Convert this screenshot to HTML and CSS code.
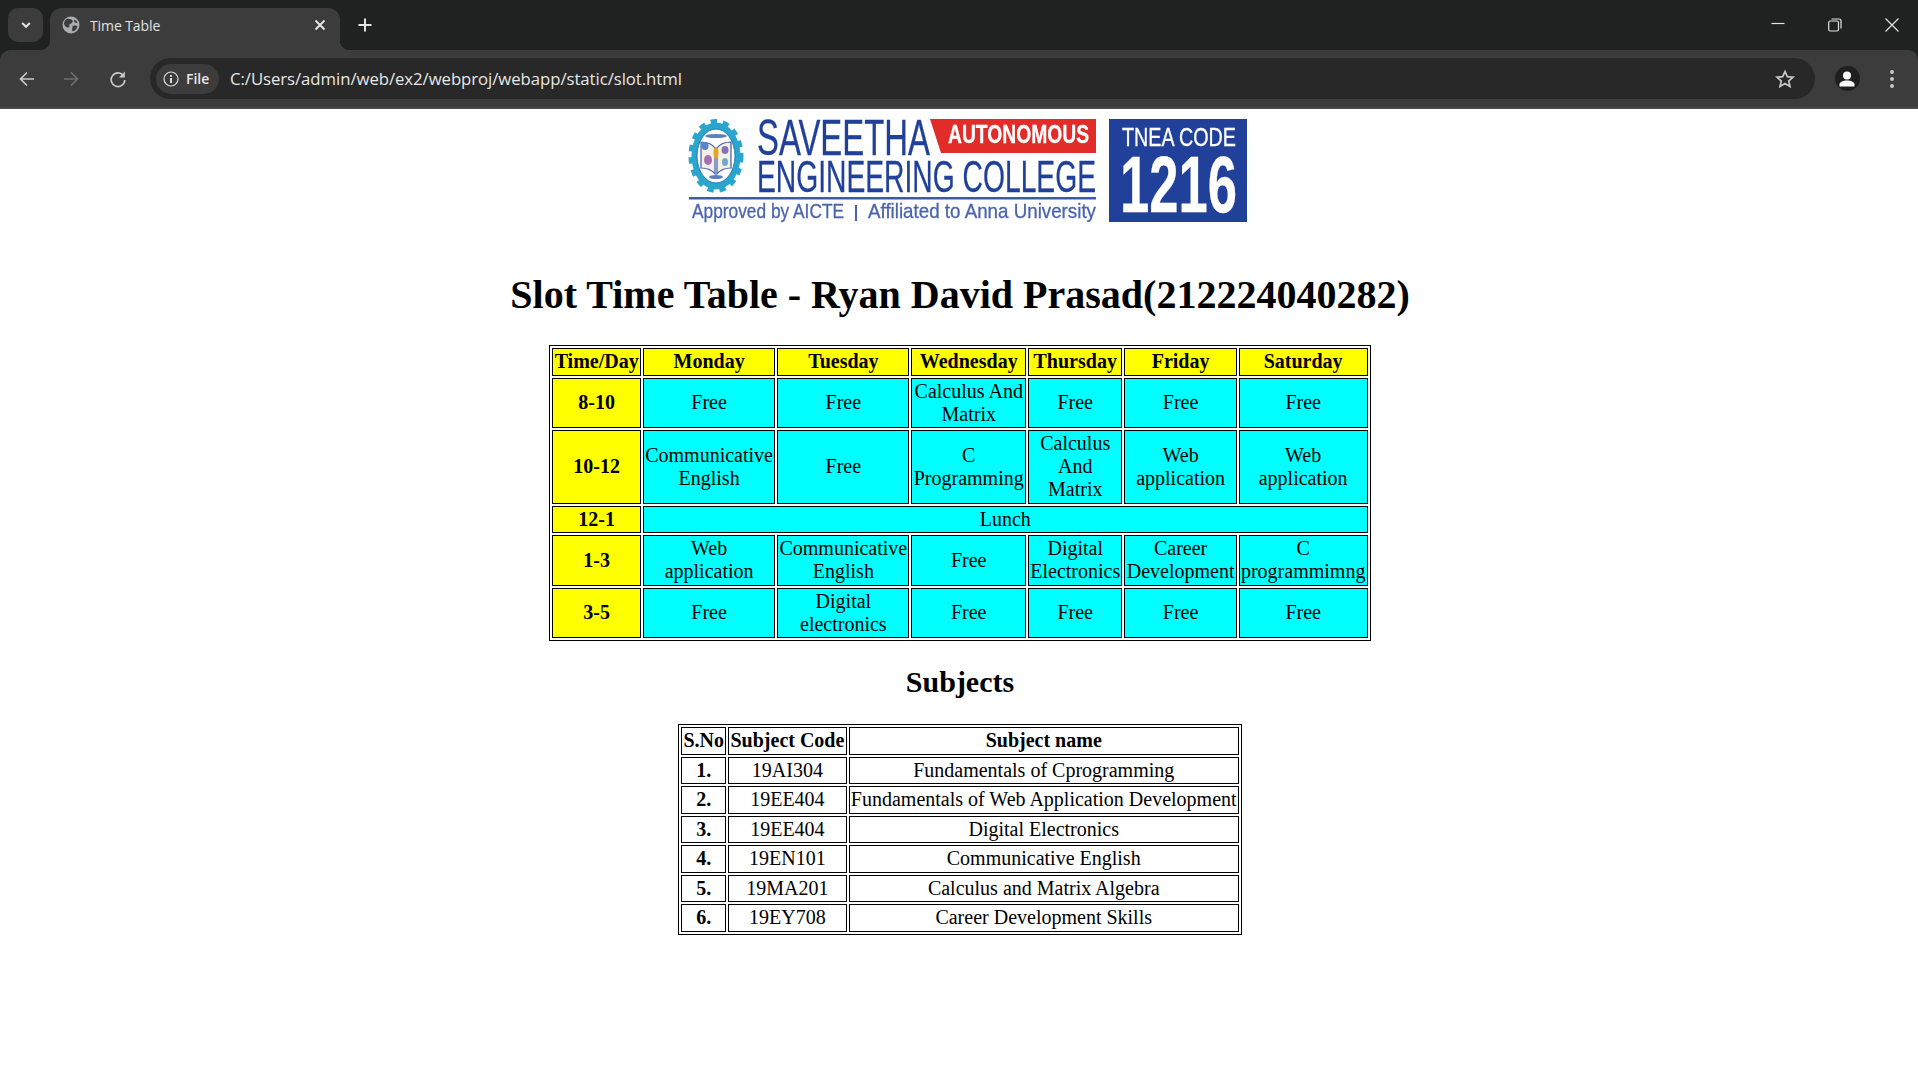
FILE: index.html
```html
<!DOCTYPE html>
<html lang="en">
<head>
<meta charset="utf-8">
<title>Time Table</title>
<link rel="stylesheet" href="styles.css">
</head>
<body>
<header class="browser">
  <div class="tabstrip">
    <button class="tabsearch"><svg width="12" height="12" viewBox="0 0 12 12"><path d="M2.200 4l3.800 3.800L9.800 4" class="ln2"/></svg></button>
    <div class="tab">
      <svg class="globe" width="18" height="18" viewBox="0 0 18 18"><circle cx="9" cy="9" r="8.500" fill="#a9adb1"/><path d="M4.500 3c2.500-.6 5 .2 6 1.500S9.500 7.500 8 8 8.500 11 6.500 11.500 2.500 10 2 8C2 6 3 4 4.500 3zM10.500 10c2-.6 4-.6 5 .3-.5 2.500-2 4-4 5-1.300-.3-1.800-1.300-1.500-2.300s1-2 .5-3zM12.500 3.500c1.300.7 2.300 1.800 3 3.200-1 .5-2.300.2-3-.7s-.4-1.600 0-2.500z" fill="#3c3c3c"/></svg>
      <span class="tabtitle">Time Table</span>
      <svg class="tabclose" width="12" height="12" viewBox="0 0 12 12"><path d="M1.500 1.500l9 9M10.500 1.500l-9 9" class="ln2"/></svg>
    </div>
    <svg class="newtab" width="14" height="14" viewBox="0 0 14 14"><path d="M7 .5v13M.5 7h13" class="ln2"/></svg>
    <div class="winctl">
      <svg width="14" height="14" viewBox="0 0 14 14"><path d="M.5 5.500h13" class="ln1"/></svg>
      <svg width="14" height="14" viewBox="0 0 14 14"><rect x=".7" y="3" width="9.800" height="10" rx="1.500" class="ln1"/><path d="M3.500 1h7.500c1.300 0 2 .7 2 2v7.500" class="ln1"/></svg>
      <svg width="14" height="14" viewBox="0 0 14 14"><path d="M.5.500l13 13M13.500.500l-13 13" class="ln1"/></svg>
    </div>
  </div>
  <div class="toolbar">
    <svg class="navicon" width="18" height="18" viewBox="0 0 18 18"><path d="M16 9H2.500M9 2.500L2.500 9 9 15.500" class="ln2 soft"/></svg>
    <svg class="navicon" width="18" height="18" viewBox="0 0 18 18"><path d="M2 9h13.500M9 2.500L15.500 9 9 15.500" class="ln2 dim"/></svg>
    <svg class="navicon" width="18" height="18" viewBox="0 0 18 18"><path d="M14.300 5.500A6.800 6.800 0 1 0 15.800 10" class="ln2 soft"/><path d="M15.800 1.500v6h-6z" fill="#c7c7c7"/></svg>
    <div class="omnibox">
      <div class="chip">
        <svg width="16" height="16" viewBox="0 0 16 16"><circle cx="8" cy="8" r="7" class="ln1 chipline"/><path d="M8 7v5M8 4v1.800" class="ln2 chipline"/></svg>
        <span>File</span>
      </div>
      <span class="url">C:/Users/admin/web/ex2/webproj/webapp/static/slot.html</span>
      <svg class="star" width="20" height="20" viewBox="0 0 20 20"><path d="M10 2.500l2.300 5.200 5.700.5-4.300 3.800 1.300 5.600-5-3-5 3 1.300-5.600L2 8.200l5.700-.5z" class="ln2 soft"/></svg>
    </div>
    <div class="avatar"><svg width="18" height="18" viewBox="0 0 18 18"><circle cx="9" cy="5.500" r="4" fill="#fff"/><path d="M1.500 16.500v-2c0-2.500 4-4 7.500-4s7.500 1.500 7.500 4v2z" fill="#fff"/></svg></div>
    <svg class="menu" width="6" height="18" viewBox="0 0 6 18"><circle cx="3" cy="2" r="2"/><circle cx="3" cy="9" r="2"/><circle cx="3" cy="16" r="2"/></svg>
  </div>
</header>
<main class="page">
  <svg class="logo" width="580" height="136" viewBox="670 109 580 136">
    <g class="blur">
      <ellipse cx="716" cy="156" rx="24.500" ry="33.500" fill="#2aa5cd"/>
      <ellipse cx="716" cy="156" rx="25.500" ry="35" fill="none" stroke="#2aa5cd" stroke-width="4" stroke-dasharray="6.500 6"/>
      <ellipse cx="716" cy="156" rx="19" ry="27" fill="#fff" stroke="#1f7fb0" stroke-width="1"/>
      <path d="M701 142c5 0 11 2 14 6v26c-3-4-9-6-14-6zM731 142c-5 0-11 2-14 6v26c3-4 9-6 14-6z" fill="#f3efe2" stroke="#3f5cab" stroke-width="1.200"/>
      <ellipse cx="705" cy="146" rx="3.500" ry="4" fill="#5a83c8"/>
      <ellipse cx="708" cy="160" rx="4" ry="5" fill="#a56fb4"/>
      <ellipse cx="725" cy="150" rx="3.500" ry="4" fill="#8a6fb8"/>
      <ellipse cx="725" cy="162" rx="3" ry="4" fill="#6fa8c8"/>
      <ellipse cx="716" cy="153" rx="2.500" ry="6" fill="#e5a32a"/>
      <ellipse cx="716" cy="136" rx="11" ry="2" fill="#5f7fb8"/>
      <ellipse cx="716" cy="177" rx="7" ry="2" fill="#5f7fb8"/>
      <polygon points="930,119 1096,119 1096,153 941,153" fill="#e22c2a"/>
      <text x="757" y="155" class="lg" textLength="173" lengthAdjust="spacingAndGlyphs" font-size="50">SAVEETHA</text>
      <text x="948" y="143" class="lg white bold" textLength="141" lengthAdjust="spacingAndGlyphs" font-size="25">AUTONOMOUS</text>
      <text x="757" y="192" class="lg" textLength="339" lengthAdjust="spacingAndGlyphs" font-size="45">ENGINEERING COLLEGE</text>
      <rect x="689" y="197" width="407" height="2.500" fill="#3d5aa6"/>
      <text x="692" y="218" class="lg soft-blue" textLength="152" lengthAdjust="spacingAndGlyphs" font-size="21">Approved by AICTE</text>
      <rect x="855" y="205" width="2" height="16" fill="#4a63ae"/>
      <text x="868" y="218" class="lg soft-blue" textLength="228" lengthAdjust="spacingAndGlyphs" font-size="21">Affiliated to Anna University</text>
      <rect x="1109" y="119" width="138" height="103" fill="#21409a"/>
      <text x="1122" y="146" class="lg white" textLength="114" lengthAdjust="spacingAndGlyphs" font-size="25">TNEA CODE</text>
      <text x="1120" y="212" class="lg white bold" textLength="117" lengthAdjust="spacingAndGlyphs" font-size="80">1216</text>
    </g>
  </svg>
  <h1 class="title">Slot Time Table - Ryan David Prasad(212224040282)</h1>
  <table class="grid slots">
    <tr class="head"><th>Time/Day</th><th>Monday</th><th>Tuesday</th><th>Wednesday</th><th>Thursday</th><th>Friday</th><th>Saturday</th></tr>
    <tr><th>8-10</th><td>Free</td><td>Free</td><td>Calculus And Matrix</td><td>Free</td><td>Free</td><td>Free</td></tr>
    <tr><th>10-12</th><td>Communicative English</td><td>Free</td><td>C Programming</td><td>Calculus And Matrix</td><td>Web application</td><td>Web application</td></tr>
    <tr><th>12-1</th><td colspan="6">Lunch</td></tr>
    <tr><th>1-3</th><td>Web application</td><td>Communicative English</td><td>Free</td><td>Digital Electronics</td><td>Career Development</td><td>C programmimng</td></tr>
    <tr><th>3-5</th><td>Free</td><td>Digital electronics</td><td>Free</td><td>Free</td><td>Free</td><td>Free</td></tr>
  </table>
  <h2 class="subtitle">Subjects</h2>
  <table class="grid subjects">
    <tr><th>S.No</th><th>Subject Code</th><th>Subject name</th></tr>
    <tr><th>1.</th><td>19AI304</td><td>Fundamentals of Cprogramming</td></tr>
    <tr><th>2.</th><td>19EE404</td><td>Fundamentals of Web Application Development</td></tr>
    <tr><th>3.</th><td>19EE404</td><td>Digital Electronics</td></tr>
    <tr><th>4.</th><td>19EN101</td><td>Communicative English</td></tr>
    <tr><th>5.</th><td>19MA201</td><td>Calculus and Matrix Algebra</td></tr>
    <tr><th>6.</th><td>19EY708</td><td>Career Development Skills</td></tr>
  </table>
</main>
</body>
</html>
```
FILE: styles.css
```css
* { box-sizing: border-box; }
html, body { margin: 0; padding: 0; background: #fff; }
body { font-family: "Liberation Serif", serif; color: #000; overflow: hidden; height: 1087px; }

.browser { font-family: "Open Sans", "Noto Sans", sans-serif; height: 109px; background: #202222; display: flex; flex-direction: column; }
.ln1 { fill: none; stroke: #e3e3e3; stroke-width: 1.200; }
.ln2 { fill: none; stroke: #e3e3e3; stroke-width: 2; }
.ln2.soft { stroke: #c7c7c7; stroke-width: 1.700; }
.ln2.dim { stroke: #6f6f6f; stroke-width: 1.700; }
.ln2.chipline, .ln1.chipline { stroke: #dcdcdc; }

.tabstrip { height: 50px; flex: none; display: flex; align-items: flex-start; padding-top: 8px; padding-left: 8px; }
.tabsearch { width: 35px; height: 34px; margin: 0; padding: 0; border: 0; border-radius: 10px; background: #3c3c3c; display: flex; align-items: center; justify-content: center; }
.tab { position: relative; width: 290px; height: 42px; margin-left: 7px; background: #3c3c3c; border-radius: 12px 12px 0 0; display: flex; align-items: center; padding: 0 14px 8px 12px; color: #e3e3e3; }
.tab::before, .tab::after { content: ""; position: absolute; bottom: 0; width: 10px; height: 10px; }
.tab::before { left: -10px; background: radial-gradient(circle at 0 0, transparent 10px, #3c3c3c 10.5px); }
.tab::after { right: -10px; background: radial-gradient(circle at 100% 0, transparent 10px, #3c3c3c 10.5px); }
.globe { flex: none; }
.tabtitle { flex: 1; margin-left: 10px; font-size: 14px; letter-spacing: -.1px; }
.tabclose { flex: none; }
.newtab { margin: 10px 0 0 18px; }
.winctl { margin-left: auto; display: flex; gap: 43px; padding: 10px 19px 0 0; }
.winctl svg { display: block; }

.toolbar { height: 59px; flex: none; background: #3c3c3c; border-radius: 10px 10px 0 0; display: flex; align-items: center; padding: 0 0 0 18px; border-bottom: 2px solid #4a4a4a; }
.navicon { margin-right: 26px; flex: none; }
.toolbar .navicon:nth-child(2) { margin-right: 29px; }
.toolbar .navicon:nth-child(3) { margin-right: 23px; }
.omnibox { width: 1665px; height: 41px; border-radius: 21px; background: #282828; display: flex; align-items: center; padding: 0 20px 0 6px; color: #e6e6e6; flex: none; }
.chip { height: 30px; width: 63px; border-radius: 15px; background: #3c3c3c; display: flex; align-items: center; gap: 7px; padding-left: 7px; font-size: 14px; font-weight: 600; flex: none; }
.url { margin-left: 11px; font-size: 16.750px; letter-spacing: -.06px; flex: 1; white-space: nowrap; }
.star { flex: none; }
.avatar { margin-left: 19.500px; width: 25px; height: 25px; border-radius: 50%; background: #1f1f1f; display: flex; align-items: center; justify-content: center; flex: none; }
.menu { margin-left: 29.500px; fill: #c7c7c7; flex: none; }

.page { display: flex; flex-direction: column; align-items: center; padding-left: 2px; }
.logo { display: block; flex: none; }
.blur { filter: blur(.6px); }
.lg { font-family: "Liberation Sans Narrow", "Liberation Sans", sans-serif; fill: #21409a; stroke: #21409a; stroke-width: .3px; }
.lg.white { fill: #fff; stroke: #fff; }
.lg.bold { font-weight: 700; }
.lg.soft-blue { fill: #4a63ae; stroke: #4a63ae; }

.title { margin: 27px 0 0; font-size: 40px; line-height: 46px; font-weight: 700; text-align: center; }
.subtitle { margin: 24px 0 0; font-size: 30px; line-height: 34px; font-weight: 700; text-align: center; }

.grid { border: 1px solid #000; border-spacing: 2px; border-collapse: separate; font-size: 20px; line-height: 23px; }
.grid th, .grid td { border: 1px solid #000; padding: 1.250px; text-align: center; vertical-align: middle; }
.subjects { margin-top: 25px; }
.slots { width: 1%; margin-top: 27px; }
.slots th { background: #ff0; }
.slots td { background: #0ff; }
```
